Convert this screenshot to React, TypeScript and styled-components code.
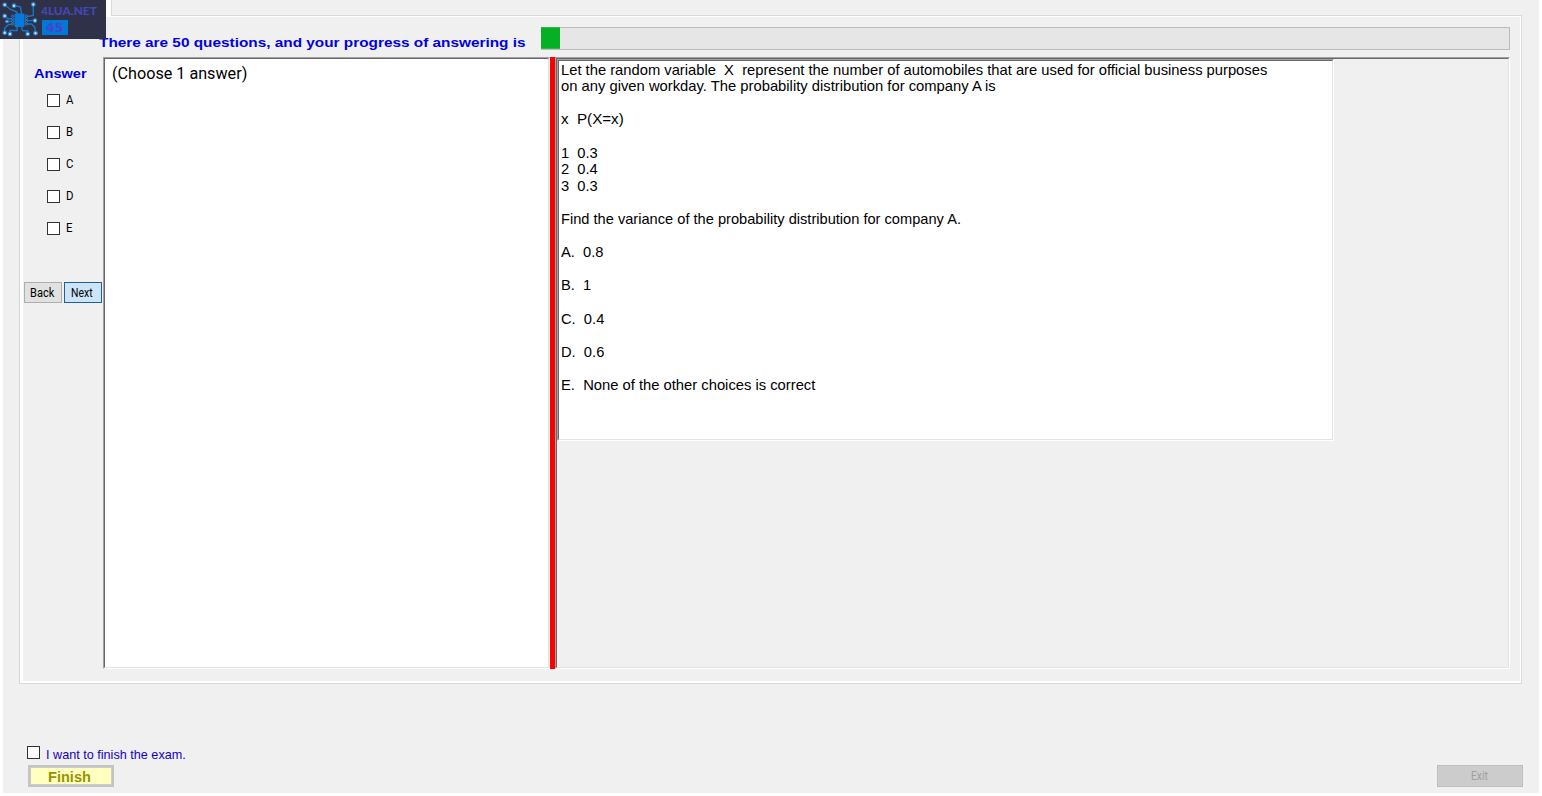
import React from "react";
import styled, { createGlobalStyle } from "styled-components";

const Global = createGlobalStyle`
  *, *::before, *::after { box-sizing: border-box; }
  body { margin: 0; background: #fff; font-family: "Liberation Sans", Arial, sans-serif; color: #000; overflow: hidden; }
`;

const Page = styled.div`
  width: 1542px;
  height: 796px;
  padding: 0 3px 3px;
  background: #fff;
`;

const Window = styled.main`
  position: relative;
  height: 793px;
  background: #f0f0f0;
  display: flex;
  flex-direction: column;
`;

const TopStrip = styled.div`
  position: relative;
  height: 16px;
  margin: 0 18px -1px 103px;
  padding-left: 5px;
  background: #fff;
`;

const StripBody = styled.div`
  height: 16px;
  background: #f0f0f0;
  border: solid #d9d9d9;
  border-width: 0 0 1px 1px;
`;

const ExamFrame = styled.section`
  width: 1503px;
  height: 669px;
  margin-left: 16px;
  border: 1px solid #d9d9d9;
  background: #fff;
  padding: 1px 1px 2px 3px;
`;

const FrameBody = styled.div`
  height: 664px;
  background: #f0f0f0;
  display: flex;
  flex-direction: column;
`;

const Header = styled.header`
  display: flex;
  height: 40px;
  padding: 10px 10px 7px 76px;
`;

const Caption = styled.div`
  width: 442px;
  padding-top: 8px;
`;

const Label = styled.span<{ $size: number; $scale?: number; $color?: string; $weight?: number; $family?: string; $line?: number }>`
  display: inline-block;
  white-space: pre;
  line-height: ${p => p.$line || 16}px;
  vertical-align: top;
  transform-origin: 0 50%;
  transform: ${p => (p.$scale ? `scaleX(${p.$scale})` : "none")};
  font-family: ${p => p.$family || '"Liberation Sans", Arial, sans-serif'};
  font-size: ${p => p.$size}px;
  font-weight: ${p => p.$weight || 400};
  color: ${p => p.$color || "#000"};
`;

const Progress = styled.div`
  flex: 1;
  height: 23px;
  background: #e6e6e6;
  border: 1px solid #bcbcbc;
  border-left: 0;
`;

const ProgressFill = styled.div`
  width: 19px;
  height: 22px;
  margin-top: -1px;
  background: #06b025;
  border-bottom: 1px solid #35b54c;
  border-top: 1px solid #35b54c;
`;

const Content = styled.div`
  display: flex;
  height: 612px;
`;

const AnswerColumn = styled.aside`
  width: 80px;
  padding: 9px 0 0 1px;
`;

const AnswerTitle = styled.h2`
  margin: 0 0 12px 10px;
  height: 16px;
  line-height: 16px;
`;

const Option = styled.label`
  display: flex;
  align-items: flex-start;
  gap: 6px;
  height: 32px;
  padding-left: 23px;
`;

const Check = styled.span`
  width: 13px;
  height: 13px;
  flex: none;
  border: 1px solid #333;
  background: #fff;
`;

const OptionText = styled.span`
  margin-top: -2px;
  height: 16px;
`;

const NavRow = styled.div`
  display: flex;
  gap: 2px;
  margin-top: 28px;
`;

const NavButton = styled.button<{ $active?: boolean }>`
  width: 38px;
  height: 21px;
  padding: 1px 0 1px ${p => (p.$active ? 6 : 5)}px;
  text-align: left;
  line-height: 16px;
  border: 1px solid ${p => (p.$active ? "#1f5f9c" : "#adadad")};
  background: ${p => (p.$active ? "#cce4f7" : "#e1e1e1")};
`;

const Sunken = styled.div`
  border: 1px solid;
  border-color: #a0a0a0 #fff #fff #a0a0a0;
`;

const SunkenInner = styled.div<{ $white?: boolean }>`
  height: 100%;
  border: 1px solid;
  border-color: #696969 #e3e3e3 #e3e3e3 #696969;
  background: ${p => (p.$white ? "#fff" : "#f0f0f0")};
`;

const NotePane = styled(Sunken)`
  width: 447px;
`;

const NoteText = styled.div`
  padding: 7px 0 0 7px;
`;

const Splitter = styled.div`
  width: 5px;
  background: #f00;
`;

const QuestionPane = styled(Sunken)`
  width: 955px;
`;

const QuestionBox = styled(Sunken)`
  width: 777px;
  height: 382px;
`;

const QuestionText = styled.div`
  padding: 0.6px 0 0 2px;
`;

const Line = styled.div`
  height: 16.6px;
`;

const Footer = styled.footer`
  display: flex;
  justify-content: space-between;
  padding: 62px 16px 0 24px;
`;

const FinishRow = styled.div`
  display: flex;
  gap: 6px;
  height: 19px;
`;

const FinishLabel = styled.span`
  padding-top: 1px;
`;

const FinishButton = styled.button`
  display: block;
  margin-left: 1px;
  width: 86px;
  height: 22px;
  padding: 1px 0 0 18px;
  text-align: left;
  line-height: 16px;
  border: 2px solid #c4c4c4;
  box-shadow: inset 0 0 0 1px #ccc;
  background: #ffffc0;
`;

const ExitButton = styled.button`
  width: 86px;
  height: 22px;
  margin-top: 19px;
  padding: 1px 0 1px 33px;
  text-align: left;
  line-height: 16px;
  border: 1px solid #bfbfbf;
  background: #ccc;
`;

const Badge = styled.div`
  position: absolute;
  left: -3px;
  top: 0;
  width: 106px;
  height: 39px;
  display: flex;
  background: #2f3148;
`;

const BadgeText = styled.div`
  padding: 3px 0 0 3px;
  display: flex;
  flex-direction: column;
`;

const BadgeCount = styled.div`
  width: 26px;
  height: 15px;
  margin: 1px 0 0 1px;
  padding-left: 4px;
  line-height: 15px;
  background: #0078d7;
`;

const LogoSvg = styled.svg`
  flex: none;
`;

const NODES = [[4.7, 4.8], [14, 5.7], [33.3, 4.5], [4.7, 16], [35, 20.6], [4.7, 32.7], [10, 34], [27.7, 34], [35.5, 33.2]];
const PINS = [16, 18.7, 21.4, 24.1];

const ChipLogo = () => (
  <LogoSvg width="38" height="39" viewBox="0 0 38 39" fill="none">
    <g stroke="#1a75c4" strokeWidth="1.4">
      <path d="M4.7 4.8L10.500 9.500L17 12V14M14 5.700L20.500 6.800L21.500 14M33.300 4.500V15.500L25 17M4.700 16L8 18.700H14M14 21.400H7M14 24.100L8.500 24.500L4.700 28V32.700M17 27V30.500H10V34M21.500 27L22.500 30.500L27.700 31V34M25 20.600H35M25 24H31.500L35 27.500V33.200" />
    </g>
    <g fill="#2f3148" stroke="#3389d0" strokeWidth=".8">
      {PINS.map(y => (
        <React.Fragment key={y}>
          <circle cx="12.600" cy={y} r="1.100" />
          <circle cx="26.400" cy={y} r="1.100" />
        </React.Fragment>
      ))}
    </g>
    <rect x="14.500" y="13.500" width="10" height="13.500" rx="1" fill="#0879dc" />
    <g fill="#c9e2f5" stroke="#2481cb" strokeWidth="1.200">
      {NODES.map(([x, y]) => (
        <circle key={`${x}-${y}`} cx={x} cy={y} r="1.800" />
      ))}
      <circle cx="7" cy="21.400" r="1.300" />
    </g>
  </LogoSvg>
);

const ROBOTO = 'Roboto, "Liberation Sans", sans-serif';
const QUESTION: [string, number][] = [
  ["Let the random variable  X  represent the number of automobiles that are used for official business purposes", 0.983],
  ["on any given workday. The probability distribution for company A is", 0.985],
  ["", 1], ["x  P(X=x)", 1.01], ["", 1],
  ["1  0.3", 0.98], ["2  0.4", 0.98], ["3  0.3", 0.98], ["", 1],
  ["Find the variance of the probability distribution for company A.", 0.975],
  ["", 1], ["A.  0.8", 0.98], ["", 1], ["B.  1", 0.98], ["", 1],
  ["C.  0.4", 0.98], ["", 1], ["D.  0.6", 0.98], ["", 1],
  ["E.  None of the other choices is correct", 0.984],
];

export default function App() {
  return (
    <Page>
      <Global />
      <Window>
        <TopStrip><StripBody /></TopStrip>
        <ExamFrame>
          <FrameBody>
            <Header>
              <Caption>
                <Label $size={13.5} $weight={700} $color="#0000e0" $scale={1.137}>There are 50 questions, and your progress of answering is</Label>
              </Caption>
              <Progress><ProgressFill /></Progress>
            </Header>
            <Content>
              <AnswerColumn>
                <AnswerTitle><Label $size={13} $weight={700} $color="#0000e0" $scale={1.12}>Answer</Label></AnswerTitle>
                {["A", "B", "C", "D", "E"].map(o => (
                  <Option key={o}>
                    <Check />
                    <OptionText><Label $size={12} $family={ROBOTO} $scale={0.95}>{o}</Label></OptionText>
                  </Option>
                ))}
                <NavRow>
                  <NavButton><Label $size={12} $family={ROBOTO} $scale={0.92}>Back</Label></NavButton>
                  <NavButton $active><Label $size={12} $family={ROBOTO} $scale={0.87}>Next</Label></NavButton>
                </NavRow>
              </AnswerColumn>
              <NotePane>
                <SunkenInner $white>
                  <NoteText><Label $size={16} $family={ROBOTO} $scale={1.01}>(Choose 1 answer)</Label></NoteText>
                </SunkenInner>
              </NotePane>
              <Splitter />
              <QuestionPane>
                <SunkenInner>
                  <QuestionBox>
                    <SunkenInner $white>
                      <QuestionText>
                        {QUESTION.map(([text, scale], i) => (
                          <Line key={i}><Label $size={15} $scale={scale}>{text}</Label></Line>
                        ))}
                      </QuestionText>
                    </SunkenInner>
                  </QuestionBox>
                </SunkenInner>
              </QuestionPane>
            </Content>
          </FrameBody>
        </ExamFrame>
        <Footer>
          <div>
            <FinishRow>
              <Check />
              <FinishLabel><Label $size={13} $color="#1400c8" $scale={0.972}>I want to finish the exam.</Label></FinishLabel>
            </FinishRow>
            <FinishButton><Label $size={14} $weight={700} $color="#949400" $scale={1.04}>Finish</Label></FinishButton>
          </div>
          <ExitButton><Label $size={12} $family={ROBOTO} $color="#a0a0a0" $scale={0.86}>Exit</Label></ExitButton>
        </Footer>
        <Badge>
          <ChipLogo />
          <BadgeText>
            <Label $size={10.5} $weight={900} $color="#4347b5" $family="Lato, sans-serif" $scale={1.13}>4LUA.NET</Label>
            <BadgeCount><Label $size={13} $line={15} $weight={700} $color="#4a44cc" $family='"DejaVu Sans", sans-serif' $scale={0.96}>45</Label></BadgeCount>
          </BadgeText>
        </Badge>
      </Window>
    </Page>
  );
}
